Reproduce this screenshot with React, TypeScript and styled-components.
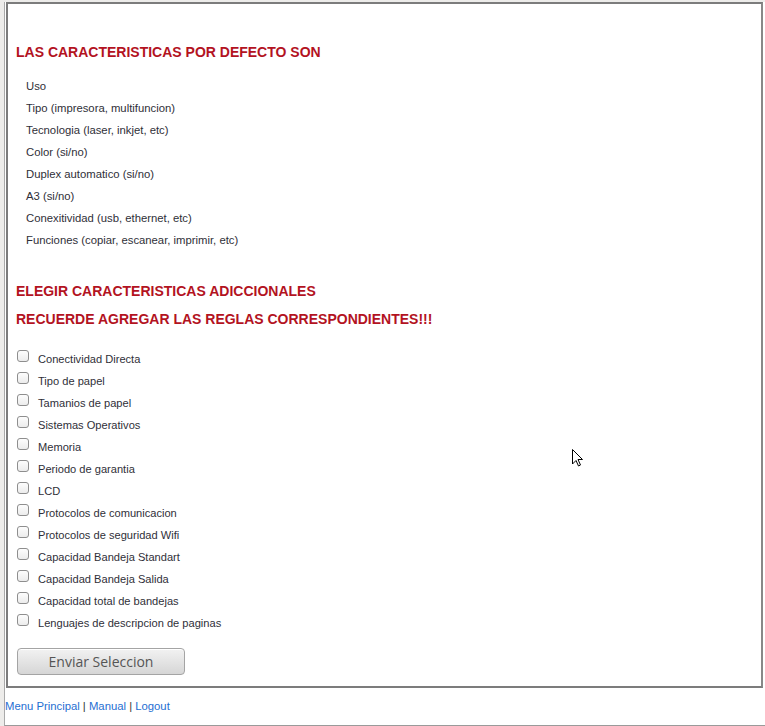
import React from "react";
import styled, { createGlobalStyle } from "styled-components";

const Global = createGlobalStyle`
  html, body { margin: 0; padding: 0; background: #edecea; }
  body { font-family: "Liberation Sans", Arial, sans-serif; }
`;

const Page = styled.div`
  position: relative;
  padding-top: 2px;
  padding-left: 4px;
  height: 726px;
  box-sizing: border-box;
`;

const Outer = styled.div`
  background: #fff;
  border-left: 1px solid #a9a9a9;
  border-bottom: 1px solid #9a9a9a;
  width: 770px;
  box-sizing: border-box;
  padding-left: 1px;
  padding-bottom: 12px;
`;

const Frame = styled.div`
  width: 757px;
  box-sizing: border-box;
  border: 2px solid #7c7c7c;
  border-right-color: #888;
  padding: 0 0 11px 0;
  background: #fff;
`;

const Heading = styled.h2<{ $top: number }>`
  margin: ${(p) => p.$top}px 0 0 8px;
  font-size: 14px;
  line-height: 18px;
  font-weight: bold;
  color: #b3131f;
  font-family: "Liberation Sans", Arial, sans-serif;
`;

const List = styled.ul`
  list-style: none;
  margin: 14px 0 0 18px;
  padding: 0;
`;

const Item = styled.li`
  font-size: 11.3px;
  line-height: 22px;
  height: 22px;
  color: #2f2f38;
`;

const Checks = styled.div`
  margin-top: 19px;
  display: flex;
  flex-direction: column;
`;

const CheckRow = styled.label`
  display: flex;
  align-items: flex-start;
  height: 22px;
  padding-left: 9px;
`;

const Box = styled.input.attrs({ type: "checkbox" })`
  appearance: none;
  -webkit-appearance: none;
  margin: 3px 0 0 0;
  width: 12px;
  height: 12px;
  border: 1px solid #8e8e8e;
  border-radius: 3px;
  background: linear-gradient(#fdfdfd, #ececec);
  box-sizing: border-box;
  flex: none;
`;

const CheckText = styled.span`
  margin-left: 9px;
  padding-top: 1px;
  font-size: 11.1px;
  line-height: 22px;
  color: #2f2f38;
`;

const Button = styled.button`
  margin: 15px 0 0 9px;
  width: 168px;
  height: 27px;
  border: 1px solid #a4a4a4;
  border-radius: 4px;
  background: linear-gradient(#f2f2f2, #d6d6d6);
  box-shadow: inset 0 1px 0 #fff;
  font-family: "Open Sans", "DejaVu Sans", sans-serif;
  font-size: 14px;
  color: #555;
  padding: 0;
  display: block;
`;

const Footer = styled.div`
  padding: 11px 0 0 0;
  margin-left: -1px;
  font-size: 11.3px;
  line-height: 14px;
  color: #333;
`;

const Link = styled.a`
  color: #1f6fd2;
  text-decoration: none;
`;

const Cursor = styled.svg`
  position: absolute;
  left: 571px;
  top: 448px;
`;

const defaults = [
  "Uso",
  "Tipo (impresora, multifuncion)",
  "Tecnologia (laser, inkjet, etc)",
  "Color (si/no)",
  "Duplex automatico (si/no)",
  "A3 (si/no)",
  "Conexitividad (usb, ethernet, etc)",
  "Funciones (copiar, escanear, imprimir, etc)",
];

const extras = [
  "Conectividad Directa",
  "Tipo de papel",
  "Tamanios de papel",
  "Sistemas Operativos",
  "Memoria",
  "Periodo de garantia",
  "LCD",
  "Protocolos de comunicacion",
  "Protocolos de seguridad Wifi",
  "Capacidad Bandeja Standart",
  "Capacidad Bandeja Salida",
  "Capacidad total de bandejas",
  "Lenguajes de descripcion de paginas",
];

export default function App() {
  return (
    <>
      <Global />
      <Page>
        <Outer>
          <Frame>
            <Heading $top={39}>LAS CARACTERISTICAS POR DEFECTO SON</Heading>
            <List>
              {defaults.map((d) => (
                <Item key={d}>{d}</Item>
              ))}
            </List>
            <Heading $top={31}>ELEGIR CARACTERISTICAS ADICCIONALES</Heading>
            <Heading $top={10}>RECUERDE AGREGAR LAS REGLAS CORRESPONDIENTES!!!</Heading>
            <Checks>
              {extras.map((e) => (
                <CheckRow key={e}>
                  <Box />
                  <CheckText>{e}</CheckText>
                </CheckRow>
              ))}
            </Checks>
            <Button>Enviar Seleccion</Button>
          </Frame>
          <Footer>
            <Link href="#">Menu Principal</Link> | <Link href="#">Manual</Link> |{" "}
            <Link href="#">Logout</Link>
          </Footer>
        </Outer>
        <Cursor width="14" height="20" viewBox="0 0 14 20">
          <path
            d="M1.5 1.5 L1.5 16 L5 12.5 L7.5 18 L9.5 17 L7 11.5 L11.5 11.5 Z"
            fill="#fff"
            stroke="#000"
            strokeWidth="1"
            strokeLinejoin="miter"
          />
        </Cursor>
      </Page>
    </>
  );
}
